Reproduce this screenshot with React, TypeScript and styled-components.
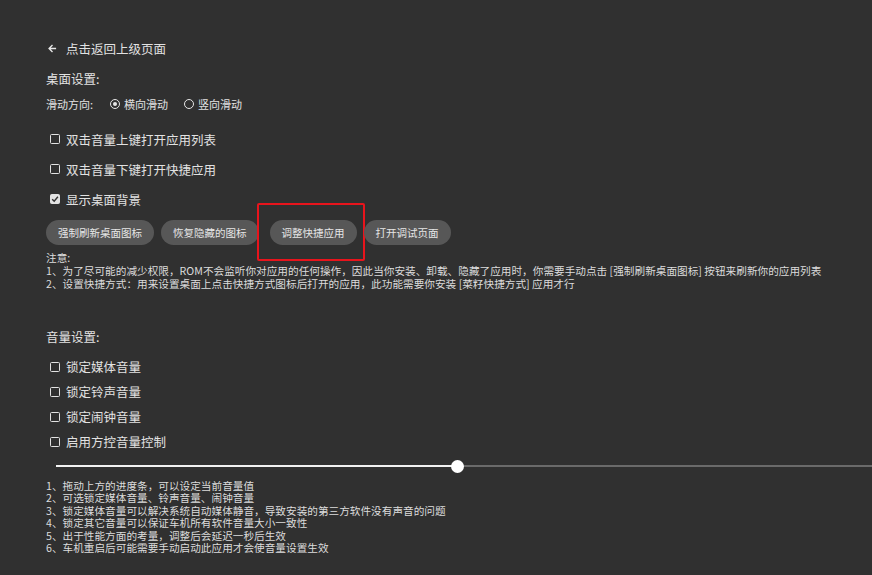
import React from "react";
import styled, { createGlobalStyle, css } from "styled-components";

const GlobalStyle = createGlobalStyle`
  html, body {
    margin: 0;
    padding: 0;
    background: #303030;
  }
  body {
    font-family: "Noto Sans CJK SC", "Noto Sans", sans-serif;
    color: #e2e2e2;
  }
`;

const Page = styled.div`
  width: 872px;
  height: 575px;
  box-sizing: border-box;
  padding: 36px 0 0 46px;
  background: #303030;
  overflow: hidden;
  display: flex;
  flex-direction: column;
`;

const BackRow = styled.div`
  display: flex;
  align-items: center;
  height: 24px;
  font-size: 12.5px;
  gap: 9px;
  padding-left: 2px;
`;

const SectionTitle = styled.div<{ $top: number }>`
  height: 20px;
  line-height: 20px;
  font-size: 12.5px;
  margin-top: ${(p) => p.$top}px;
`;

const DirectionRow = styled.div`
  display: flex;
  align-items: center;
  height: 20px;
  margin-top: 5px;
  font-size: 11px;
`;

const DirectionLabel = styled.span`
  width: 64px;
`;

const RadioOption = styled.label`
  display: flex;
  align-items: center;
  gap: 4px;
  margin-right: 16px;
`;

const RadioDot = styled.span<{ $checked?: boolean }>`
  width: 8px;
  height: 8px;
  border: 1.6px solid #e6e6e6;
  border-radius: 50%;
  display: inline-flex;
  align-items: center;
  justify-content: center;
  &::after {
    content: "";
    width: 4.5px;
    height: 4.5px;
    border-radius: 50%;
    background: ${(p) => (p.$checked ? "#e6e6e6" : "transparent")};
  }
`;

const CheckList = styled.div<{ $top: number }>`
  display: flex;
  flex-direction: column;
  margin-top: ${(p) => p.$top}px;
`;

const CheckRow = styled.label<{ $height: number }>`
  display: flex;
  align-items: center;
  height: ${(p) => p.$height}px;
  font-size: 12.5px;
  padding-left: 4px;
  gap: 6px;
`;

const Box = styled.span<{ $checked?: boolean }>`
  width: 8px;
  height: 8px;
  border: 1.6px solid #e2e2e2;
  border-radius: 1.5px;
  display: inline-flex;
  align-items: center;
  justify-content: center;
  ${(p) =>
    p.$checked &&
    css`
      background: #e2e2e2;
    `}
`;

const ButtonRow = styled.div`
  display: flex;
  gap: 7px;
  margin-top: 6px;
  height: 25px;
`;

const PillButton = styled.button<{ $highlight?: boolean }>`
  position: relative;
  height: 25px;
  padding: 0 12px;
  border: none;
  border-radius: 13px;
  background: #575757;
  color: #e6e6e6;
  font-family: inherit;
  font-size: 10.5px;
  white-space: nowrap;
  margin-left: ${(p) => (p.$highlight ? "4px" : "0")};
  ${(p) =>
    p.$highlight &&
    css`
      &::after {
        content: "";
        position: absolute;
        left: -13px;
        top: -17px;
        right: -8px;
        bottom: -16px;
        border: 2px solid #e8141c;
        border-radius: 2px;
        pointer-events: none;
      }
    `}
`;

const Notes = styled.div<{ $top: number; $line: number }>`
  margin-top: ${(p) => p.$top}px;
  font-size: 10.65px;
  line-height: ${(p) => p.$line}px;
  color: #dcdcdc;
  white-space: nowrap;
`;

const SliderRow = styled.div`
  position: relative;
  height: 16px;
  margin-top: 4px;
  margin-left: 10px;
  display: flex;
  align-items: center;
`;

const Track = styled.div<{ $active?: boolean }>`
  height: 2px;
  background: ${(p) => (p.$active ? "#f2f2f2" : "#6a6a6a")};
  flex: ${(p) => (p.$active ? "none" : "1")};
`;

const Thumb = styled.div`
  width: 13px;
  height: 13px;
  border-radius: 50%;
  background: #ffffff;
  margin: 0 -6px;
  position: relative;
  z-index: 1;
`;

const BackArrow = () => (
  <svg width="9" height="9" viewBox="0 0 10 10">
    <path d="M9 5H1.5M5 1.2L1.2 5 5 8.8" stroke="#e6e6e6" strokeWidth="1.5" fill="none" />
  </svg>
);

const CheckMark = () => (
  <svg width="8" height="8" viewBox="0 0 8 8">
    <path d="M1.2 4.2L3.2 6.2 6.9 1.8" stroke="#303030" strokeWidth="1.4" fill="none" />
  </svg>
);

const Check: React.FC<{ label: string; checked?: boolean; height: number }> = ({
  label,
  checked,
  height,
}) => (
  <CheckRow $height={height}>
    <Box $checked={checked}>{checked && <CheckMark />}</Box>
    {label}
  </CheckRow>
);

const desktopChecks = [
  { label: "双击音量上键打开应用列表" },
  { label: "双击音量下键打开快捷应用" },
  { label: "显示桌面背景", checked: true },
];

const volumeChecks = ["锁定媒体音量", "锁定铃声音量", "锁定闹钟音量", "启用方控音量控制"];

const volumeNotes = [
  "1、拖动上方的进度条，可以设定当前音量值",
  "2、可选锁定媒体音量、铃声音量、闹钟音量",
  "3、锁定媒体音量可以解决系统自动媒体静音，导致安装的第三方软件没有声音的问题",
  "4、锁定其它音量可以保证车机所有软件音量大小一致性",
  "5、出于性能方面的考量，调整后会延迟一秒后生效",
  "6、车机重启后可能需要手动启动此应用才会使音量设置生效",
];

const sliderValue = 401;

export default function App() {
  return (
    <>
      <GlobalStyle />
      <Page>
        <BackRow>
          <BackArrow />
          点击返回上级页面
        </BackRow>

        <SectionTitle $top={9}>桌面设置:</SectionTitle>
        <DirectionRow>
          <DirectionLabel>滑动方向:</DirectionLabel>
          <RadioOption>
            <RadioDot $checked />
            横向滑动
          </RadioOption>
          <RadioOption>
            <RadioDot />
            竖向滑动
          </RadioOption>
        </DirectionRow>

        <CheckList $top={10}>
          {desktopChecks.map((c) => (
            <Check key={c.label} label={c.label} checked={c.checked} height={30} />
          ))}
        </CheckList>

        <ButtonRow>
          <PillButton>强制刷新桌面图标</PillButton>
          <PillButton>恢复隐藏的图标</PillButton>
          <PillButton $highlight>调整快捷应用</PillButton>
          <PillButton>打开调试页面</PillButton>
        </ButtonRow>

        <Notes $top={6} $line={13}>
          <div>注意:</div>
          <div>
            1、为了尽可能的减少权限，ROM不会监听你对应用的任何操作，因此当你安装、卸载、隐藏了应用时，你需要手动点击 [强制刷新桌面图标] 按钮来刷新你的应用列表
          </div>
          <div>2、设置快捷方式：用来设置桌面上点击快捷方式图标后打开的应用，此功能需要你安装 [菜籽快捷方式] 应用才行</div>
        </Notes>

        <SectionTitle $top={37}>音量设置:</SectionTitle>

        <CheckList $top={7}>
          {volumeChecks.map((label) => (
            <Check key={label} label={label} height={25} />
          ))}
        </CheckList>

        <SliderRow>
          <Track $active style={{ width: sliderValue }} />
          <Thumb />
          <Track />
        </SliderRow>

        <Notes $top={6} $line={12.4}>
          {volumeNotes.map((n) => (
            <div key={n}>{n}</div>
          ))}
        </Notes>
      </Page>
    </>
  );
}
